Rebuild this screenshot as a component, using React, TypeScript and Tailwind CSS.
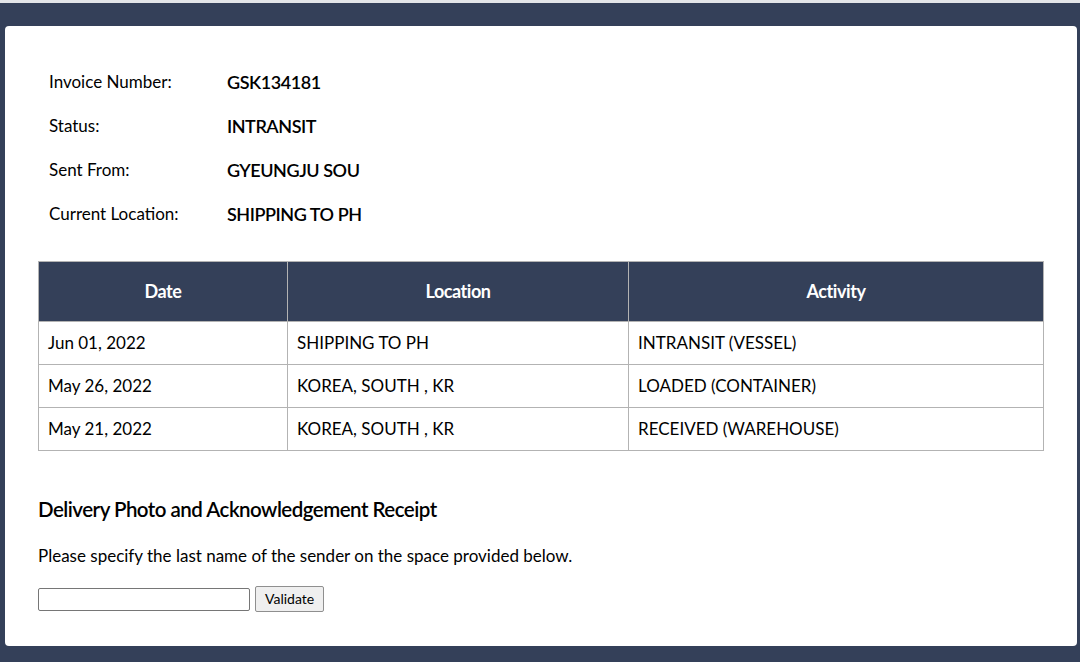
const info: [string, string][] = [
  ['Invoice Number:', 'GSK134181'],
  ['Status:', 'INTRANSIT'],
  ['Sent From:', 'GYEUNGJU SOU'],
  ['Current Location:', 'SHIPPING TO PH'],
];

const history = [
  { date: 'Jun 01, 2022', location: 'SHIPPING TO PH', activity: 'INTRANSIT (VESSEL)' },
  { date: 'May 26, 2022', location: 'KOREA, SOUTH , KR', activity: 'LOADED (CONTAINER)' },
  { date: 'May 21, 2022', location: 'KOREA, SOUTH , KR', activity: 'RECEIVED (WAREHOUSE)' },
];

export default function App() {
  return (
    <div
      className="min-h-[662px] bg-[#344059] border-t-[3px] border-[#e3e5e8] pt-[23px] pl-[5px] pr-[3px] pb-4 text-black"
      style={{ fontFamily: 'Lato, "Open Sans", sans-serif' }}
    >
      <div className="bg-white rounded-[4px] pt-[45px] px-[33px] pb-[34px]">
        <div className="pl-[11px] flex flex-col gap-[22px] leading-[22px]">
          {info.map(([label, value]) => (
            <div key={label} className="flex">
              <div className="w-[178px] text-[17px]">{label}</div>
              <div className="text-[18px] font-semibold tracking-tight">{value}</div>
            </div>
          ))}
        </div>

        <table className="mt-[36px] w-[1006px] border-collapse text-[17px]">
          <thead>
            <tr className="bg-[#344059] text-white h-[60px] text-[18px]">
              <th className="w-[249px] border border-[#b3b3b3] font-bold tracking-tight">Date</th>
              <th className="w-[341px] border border-[#b3b3b3] font-bold tracking-tight">Location</th>
              <th className="border border-[#b3b3b3] font-bold tracking-tight">Activity</th>
            </tr>
          </thead>
          <tbody>
            {history.map((row) => (
              <tr key={row.date} className="h-[43px]">
                <td className="border border-[#b3b3b3] px-[9px]">{row.date}</td>
                <td className="border border-[#b3b3b3] px-[9px]">{row.location}</td>
                <td className="border border-[#b3b3b3] px-[9px]">{row.activity}</td>
              </tr>
            ))}
          </tbody>
        </table>

        <h2 className="mt-[44px] text-[20.5px] font-semibold tracking-tight leading-[28px]">
          Delivery Photo and Acknowledgement Receipt
        </h2>
        <p className="mt-[22px] text-[17px] leading-[22px]">
          Please specify the last name of the sender on the space provided below.
        </p>
        <div className="mt-[19px] flex items-center gap-[5px]">
          <input
            type="text"
            className="w-[212px] h-[23px] border border-[#767676] rounded-[2px] bg-white"
          />
          <button className="h-[26px] px-[9px] border border-[#8f8f8f] rounded-[2px] bg-[#efefef] text-[14px] leading-[20px]">
            Validate
          </button>
        </div>
      </div>
    </div>
  );
}
